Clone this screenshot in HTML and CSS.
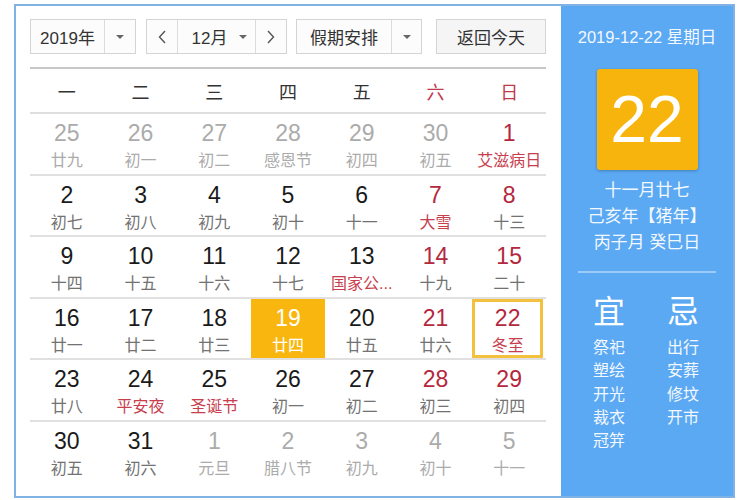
FILE: index.html
```html
<!DOCTYPE html>
<html lang="zh-CN">
<head>
<meta charset="utf-8">
<link rel="stylesheet" href="styles.css">
</head>
<body>
<div class="frame">
  <div class="main">
    <div class="toolbar">
      <div class="box year">
        <div class="txt">2019年</div>
        <div class="arr"><span class="tri"></span></div>
      </div>
      <div class="box month">
        <div class="nav"><svg width="8" height="14" viewBox="0 0 8 14"><polyline points="7,1 1.5,7 7,13" fill="none" stroke="#555" stroke-width="1.4"/></svg></div>
        <div class="mid"><span>12月</span><span class="tri"></span></div>
        <div class="nav nr"><svg width="8" height="14" viewBox="0 0 8 14"><polyline points="1,1 6.5,7 1,13" fill="none" stroke="#555" stroke-width="1.4"/></svg></div>
      </div>
      <div class="box hol">
        <div class="txt">假期安排</div>
        <div class="arr"><span class="tri"></span></div>
      </div>
      <div class="box today">返回今天</div>
    </div>
    <div class="week">
      <div>一</div><div>二</div><div>三</div><div>四</div><div>五</div><div class="red">六</div><div class="red">日</div>
    </div>
    <div class="grid">
      <div class="row">
        <div class="cell other"><b>25</b><i>廿九</i></div>
        <div class="cell other"><b>26</b><i>初一</i></div>
        <div class="cell other"><b>27</b><i>初二</i></div>
        <div class="cell other"><b>28</b><i>感恩节</i></div>
        <div class="cell other"><b>29</b><i>初四</i></div>
        <div class="cell other"><b>30</b><i>初五</i></div>
        <div class="cell wk fest"><b>1</b><i>艾滋病日</i></div>
      </div>
      <div class="row">
        <div class="cell"><b>2</b><i>初七</i></div>
        <div class="cell"><b>3</b><i>初八</i></div>
        <div class="cell"><b>4</b><i>初九</i></div>
        <div class="cell"><b>5</b><i>初十</i></div>
        <div class="cell"><b>6</b><i>十一</i></div>
        <div class="cell wk fest"><b>7</b><i>大雪</i></div>
        <div class="cell wk"><b>8</b><i>十三</i></div>
      </div>
      <div class="row">
        <div class="cell"><b>9</b><i>十四</i></div>
        <div class="cell"><b>10</b><i>十五</i></div>
        <div class="cell"><b>11</b><i>十六</i></div>
        <div class="cell"><b>12</b><i>十七</i></div>
        <div class="cell fest"><b>13</b><i>国家公...</i></div>
        <div class="cell wk"><b>14</b><i>十九</i></div>
        <div class="cell wk"><b>15</b><i>二十</i></div>
      </div>
      <div class="row">
        <div class="cell"><b>16</b><i>廿一</i></div>
        <div class="cell"><b>17</b><i>廿二</i></div>
        <div class="cell"><b>18</b><i>廿三</i></div>
        <div class="cell sel"><b>19</b><i>廿四</i></div>
        <div class="cell"><b>20</b><i>廿五</i></div>
        <div class="cell wk"><b>21</b><i>廿六</i></div>
        <div class="cell wk fest cur"><b>22</b><i>冬至</i></div>
      </div>
      <div class="row">
        <div class="cell"><b>23</b><i>廿八</i></div>
        <div class="cell fest"><b>24</b><i>平安夜</i></div>
        <div class="cell fest"><b>25</b><i>圣诞节</i></div>
        <div class="cell"><b>26</b><i>初一</i></div>
        <div class="cell"><b>27</b><i>初二</i></div>
        <div class="cell wk"><b>28</b><i>初三</i></div>
        <div class="cell wk"><b>29</b><i>初四</i></div>
      </div>
      <div class="row last">
        <div class="cell"><b>30</b><i>初五</i></div>
        <div class="cell"><b>31</b><i>初六</i></div>
        <div class="cell other"><b>1</b><i>元旦</i></div>
        <div class="cell other"><b>2</b><i>腊八节</i></div>
        <div class="cell other"><b>3</b><i>初九</i></div>
        <div class="cell other"><b>4</b><i>初十</i></div>
        <div class="cell other"><b>5</b><i>十一</i></div>
      </div>
    </div>
  </div>
  <div class="side">
    <div class="date">2019-12-22 星期日</div>
    <div class="big">22</div>
    <div class="lunar">
      <div>十一月廿七</div>
      <div>己亥年【猪年】</div>
      <div>丙子月 癸巳日</div>
    </div>
    <div class="sep"></div>
    <div class="yj">
      <div class="col">
        <div class="hd">宜</div>
        <div>祭祀</div><div>塑绘</div><div>开光</div><div>裁衣</div><div>冠笄</div>
      </div>
      <div class="col">
        <div class="hd">忌</div>
        <div>出行</div><div>安葬</div><div>修坟</div><div>开市</div>
      </div>
    </div>
  </div>
</div>
</body>
</html>
```

FILE: styles.css
```css
* { box-sizing: border-box; margin: 0; padding: 0; }
body {
  margin: 0;
  background: #fff;
  font-family: "Liberation Sans", "Noto Sans CJK SC", sans-serif;
  color: #222;
}
.frame {
  margin: 4px 0 0 14px;
  width: 721px;
  height: 494px;
  border: 2px solid #80b3e4;
  display: flex;
}
.main {
  width: 545px;
  padding: 13px 15px 0 14px;
  background: #fff;
}
.toolbar {
  display: flex;
  height: 35px;
}
.box {
  display: flex;
  height: 35px;
  border: 1px solid #d4d4d4;
  background: #fcfcfc;
  font-size: 17px;
  color: #333;
  align-items: stretch;
}
.year { width: 106px; }
.year .txt { width: 73px; }
.txt { display: flex; align-items: center; justify-content: center; }
.arr {
  flex: 1;
  border-left: 1px solid #dcdcdc;
  display: flex;
  align-items: center;
  justify-content: center;
}
.tri {
  display: inline-block;
  width: 0; height: 0;
  border-left: 4px solid transparent;
  border-right: 4px solid transparent;
  border-top: 4px solid #666;
}
.month { width: 141px; margin-left: 10px; }
.nav {
  width: 30px;
  display: flex;
  align-items: center;
  justify-content: center;
}
.mid {
  flex: 1;
  border-left: 1px solid #dcdcdc;
  border-right: 1px solid #dcdcdc;
  display: flex;
  align-items: center;
  justify-content: center;
  gap: 12px;
  padding-left: 6px;
}
.hol { width: 126px; margin-left: 9px; }
.hol .txt { width: 94px; }
.today {
  width: 110px;
  margin-left: 14px;
  justify-content: center;
  align-items: center;
  background: #f5f5f5;
}
.week {
  margin-top: 13px;
  height: 47px;
  border-top: 2px solid #c8c8c8;
  border-bottom: 2px solid #dedede;
  display: grid;
  grid-template-columns: repeat(7, 1fr);
  align-items: center;
  text-align: center;
  font-size: 18px;
  color: #333;
}
.week .red { color: #c0394b; }
.grid { display: flex; flex-direction: column; }
.row {
  display: grid;
  grid-template-columns: repeat(7, 1fr);
  height: 61.6px;
  border-bottom: 2px solid #e0e0e0;
}
.row.last { border-bottom: none; }
.cell {
  display: flex;
  flex-direction: column;
  align-items: center;
  padding-top: 6px;
}
.cell b {
  font-weight: normal;
  font-size: 23px;
  line-height: 27px;
  color: #1a1a1a;
}
.cell i {
  font-style: normal;
  font-size: 16px;
  line-height: 19px;
  margin-top: 4px;
  color: #727272;
  white-space: nowrap;
}
.cell.wk b { color: #b4283d; }
.cell.fest i { color: #c73e4e; }
.cell.other b { color: #ababab; }
.cell.other i { color: #ababab; }
.cell.sel { background: #f8b60f; }
.cell.sel b, .cell.sel i { color: #fff; }
.cell.cur {
  box-shadow: inset 0 0 0 3px #f3c13e;
  margin-right: 3px;
}
.side {
  flex: 1;
  background: #5ba8f3;
  display: flex;
  flex-direction: column;
  align-items: center;
  color: #f3f8ff;
}
.date {
  margin-top: 21px;
  font-size: 16.5px;
  line-height: 20px;
}
.big {
  margin-top: 22px;
  width: 101px;
  height: 101px;
  background: #f7b40d;
  border-radius: 3px;
  box-shadow: 0 1px 3px rgba(0, 0, 0, 0.25);
  color: #fff;
  font-size: 66px;
  line-height: 101px;
  text-align: center;
}
.lunar {
  margin-top: 8px;
  text-align: center;
  font-size: 17px;
  line-height: 26px;
}
.sep {
  margin-top: 15px;
  width: 138px;
  height: 2px;
  background: rgba(255, 255, 255, 0.4);
}
.yj {
  display: flex;
  margin-top: 20px;
  padding-right: 2px;
}
.col {
  width: 74px;
  text-align: center;
  font-size: 16px;
  line-height: 23.3px;
}
.col .hd {
  font-size: 32px;
  line-height: 38px;
  margin-bottom: 5px;
  color: #fff;
}
```
